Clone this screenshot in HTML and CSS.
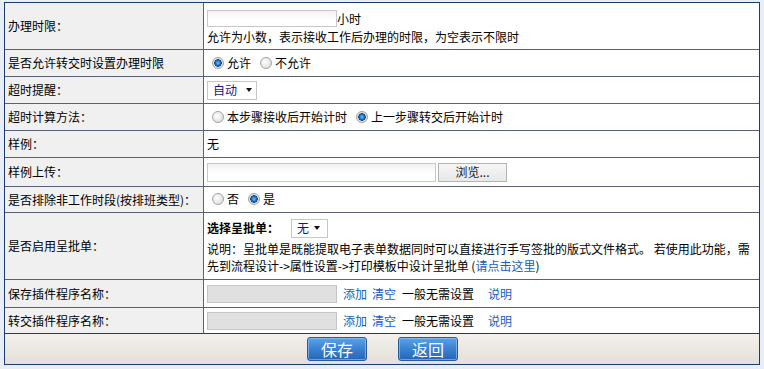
FILE: index.html
```html
<!DOCTYPE html>
<html lang="zh-CN">
<head>
<meta charset="utf-8">
<title>办理设置</title>
<link rel="stylesheet" href="styles.css">
</head>
<body>
<table class="form">
  <tr class="h47">
    <th>办理时限：</th>
    <td>
      <div class="line-input"><input type="text" class="tbox w130">小时</div>
      <div class="desc">允许为小数，表示接收工作后办理的时限，为空表示不限时</div>
    </td>
  </tr>
  <tr class="h27">
    <th>是否允许转交时设置办理时限</th>
    <td><label class="opt"><input type="radio" name="a" class="radio" checked>允许</label><label class="opt"><input type="radio" name="a" class="radio">不允许</label></td>
  </tr>
  <tr class="h27">
    <th>超时提醒：</th>
    <td><span class="select w50"><span class="val">自动</span><span class="caret"></span></span></td>
  </tr>
  <tr class="h27">
    <th>超时计算方法：</th>
    <td><label class="opt"><input type="radio" name="b" class="radio">本步骤接收后开始计时</label><label class="opt"><input type="radio" name="b" class="radio" checked>上一步骤转交后开始计时</label></td>
  </tr>
  <tr class="h27">
    <th>样例：</th>
    <td>无</td>
  </tr>
  <tr class="h29">
    <th>样例上传：</th>
    <td><span class="file"><input type="text" class="tbox w228"><button type="button" class="browse">浏览...</button></span></td>
  </tr>
  <tr class="h26">
    <th>是否排除非工作时段(按排班类型)：</th>
    <td><label class="opt"><input type="radio" name="c" class="radio">否</label><label class="opt"><input type="radio" name="c" class="radio" checked>是</label></td>
  </tr>
  <tr class="h67">
    <th>是否启用呈批单：</th>
    <td>
      <div class="pick"><b>选择呈批单：</b><span class="select w37"><span class="val">无</span><span class="caret"></span></span></div>
      <div class="desc2"><span>说明：呈批单是既能提取电子表单数据同时可以直接进行手写签批的版式文件格式。 若使用此功能，需</span><span>先到流程设计-&gt;属性设置-&gt;打印模板中设计呈批单</span> <span class="nw">(<a href="#" class="link">请点击这里</a>)</span></div>
    </td>
  </tr>
  <tr class="h28">
    <th>保存插件程序名称：</th>
    <td><span class="plug"><input type="text" class="tbox gray w130"><a href="#" class="link">添加</a><a href="#" class="link">清空</a><span class="note">一般无需设置</span><a href="#" class="link">说明</a></span></td>
  </tr>
  <tr class="h26 last">
    <th>转交插件程序名称：</th>
    <td><span class="plug"><input type="text" class="tbox gray w130"><a href="#" class="link">添加</a><a href="#" class="link">清空</a><span class="note">一般无需设置</span><a href="#" class="link">说明</a></span></td>
  </tr>
  <tr class="foot">
    <td colspan="2"><div class="btns"><button type="button" class="btn">保存</button><button type="button" class="btn">返回</button></div></td>
  </tr>
</table>
</body>
</html>
```
FILE: styles.css
```css
html, body {
  margin: 0;
  padding: 0;
  background: #e8eef8;
}
body {
  padding: 2px 0 0 4px;
  font-family: "Noto Sans CJK SC", "Liberation Sans", sans-serif;
  font-size: 12px;
  color: #000;
}
.form {
  width: 756px;
  border: 1px solid #1d3d6d;
  border-spacing: 0;
  border-collapse: separate;
  table-layout: fixed;
}
.form th, .form td {
  border-bottom: 1px solid #5c6276;
  vertical-align: middle;
  padding: 0 3px;
  line-height: 16px;
  font-weight: normal;
  text-align: left;
}
.form th {
  width: 192px;
  background: #f0f0f0;
  border-right: 1px solid #5c6276;
  white-space: nowrap;
}
.form td { background: #fff; }
.h47 { height: 47px; }
.h29 { height: 29px; }
.h28 { height: 28px; }
.h27 { height: 27px; }
.h26 { height: 26px; }
.h67 { height: 67px; }
.last th, .last td { border-bottom-color: #1d3d6d; }

.tbox {
  box-sizing: border-box;
  height: 17px;
  margin: 0;
  padding: 0 2px;
  border: 1px solid #c8c8c8;
  background: linear-gradient(#f2f2f2, #fff 60%);
  font: inherit;
  vertical-align: middle;
}
.tbox.gray { background: #e0e0e0; border-color: #c4c4c4; height: 18px; }
.w130 { width: 130px; }
.w228 { width: 229px; height: 19px; }

.line-input { display: flex; align-items: flex-end; height: 18px; margin-top: 2px; }
.desc { margin-top: 2px; }

.opt { display: inline-flex; align-items: center; margin-right: 4px; }
.radio {
  appearance: none;
  -webkit-appearance: none;
  box-sizing: border-box;
  width: 12px;
  height: 12px;
  margin: 0 3px 0 5px;
  border-radius: 50%;
  border: 1px solid #a4a4a4;
  background: radial-gradient(circle at 40% 40%, #ffffff 0, #e8e8e8 55%, #cfcfcf 100%);
}
.radio:checked {
  background: radial-gradient(circle at 50% 50%, #6fc0ff 0, #1a6fc0 2.5px, #0c3f7a 3.5px, #e6e6e6 4px, #d0d0d0 100%);
}

.select {
  box-sizing: border-box;
  display: inline-flex;
  align-items: center;
  height: 19px;
  padding: 0 0 0 5px;
  border: 1px solid #c6c6c6;
  background: #fff;
  color: #151580;
  vertical-align: middle;
}
.select .val { flex: none; }
.w50 { width: 50px; }
.w50 .caret { margin-left: 9px; }
.w37 { width: 37px; }
.w37 .caret { margin-left: 5px; }
.caret {
  flex: none;
  width: 0;
  height: 0;
  border-left: 3.5px solid transparent;
  border-right: 3.5px solid transparent;
  border-top: 4px solid #111;
}

.file { display: inline-flex; align-items: center; gap: 2px; }
.browse {
  box-sizing: border-box;
  width: 69px;
  height: 19px;
  margin: 0;
  padding: 0;
  border: 1px solid #b4b4b4;
  background: linear-gradient(#f6f6f6, #e8e8e8);
  font: inherit;
  color: #222;
}

.pick { display: flex; align-items: center; gap: 12px; height: 19px; }
.pick b { font-weight: bold; }
.desc2 { line-height: 17px; margin-top: 2px; }
.nw { white-space: nowrap; }

.link { color: #1060c0; text-decoration: none; }
.plug { display: inline-flex; align-items: center; }
.plug .tbox { margin-right: 6px; }
.plug .link { margin-right: 5px; }
.plug .note { margin: 0 14px 0 1px; }

.foot td {
  height: 30px;
  padding: 0;
  border-bottom: 0;
  background: linear-gradient(#f3f1ed, #e3dfd8);
}
.btns { display: flex; justify-content: center; gap: 31px; padding-left: 1px; }
.btn {
  box-sizing: border-box;
  width: 60px;
  height: 24px;
  margin: 0;
  padding: 0;
  border: 1px solid #2a5a98;
  border-radius: 3px;
  background: linear-gradient(#5aa2ea, #3a82d0 50%, #2566b6);
  box-shadow: inset 0 0 0 1px rgba(160, 200, 245, 0.6);
  color: #fff;
  font: 16px "Noto Sans CJK SC", sans-serif;
  line-height: 20px;
}
```
